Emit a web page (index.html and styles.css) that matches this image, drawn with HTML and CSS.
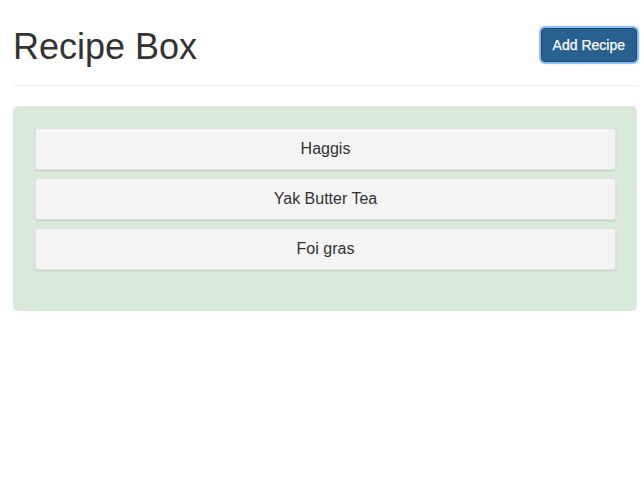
FILE: index.html
```html
<!DOCTYPE html>
<html>
<head>
<meta charset="utf-8">
<link rel="stylesheet" href="styles.css">
</head>
<body>
<div class="container">
  <header class="page-header">
    <h1 class="title">Recipe Box</h1>
    <button class="btn-add">Add Recipe</button>
  </header>
  <div class="box">
    <div class="item">Haggis</div>
    <div class="item">Yak Butter Tea</div>
    <div class="item">Foi gras</div>
  </div>
</div>
</body>
</html>
```
FILE: styles.css
```css
html, body {
  margin: 0;
  padding: 0;
  background: #fff;
}
body {
  font-family: "Liberation Sans", Arial, sans-serif;
  color: #333;
}
.container {
  padding: 27px 7px 0 13px;
}
.page-header {
  display: flex;
  justify-content: space-between;
  align-items: flex-start;
  padding-bottom: 18px;
  border-bottom: 1px solid #eee;
}
.title {
  margin: 0;
  font-size: 36px;
  font-weight: normal;
  line-height: 40px;
  color: #333;
}
.btn-add {
  margin-top: 1px;
  height: 34px;
  padding: 0 11px;
  font-family: "Liberation Sans", Arial, sans-serif;
  font-size: 14px;
  color: #fff;
  background: #286090;
  border: 1px solid #204d74;
  border-radius: 4px;
  box-shadow: 0 0 1px 2px rgba(96, 164, 240, 0.75);
  outline: none;
  -webkit-text-stroke: 0.25px #fff;
}
.box {
  margin-top: 20px;
  background: #d9eadb;
  border-radius: 5px;
  padding: 22px 21px 41px 22px;
  display: flex;
  flex-direction: column;
  gap: 8px;
}
.item {
  height: 40px;
  line-height: 40px;
  text-align: center;
  font-size: 16px;
  background: #f4f4f4;
  border: 1px solid #e2e2e2;
  border-radius: 3px;
  box-shadow: 0 1px 2px rgba(0, 0, 0, 0.12);
}
```
